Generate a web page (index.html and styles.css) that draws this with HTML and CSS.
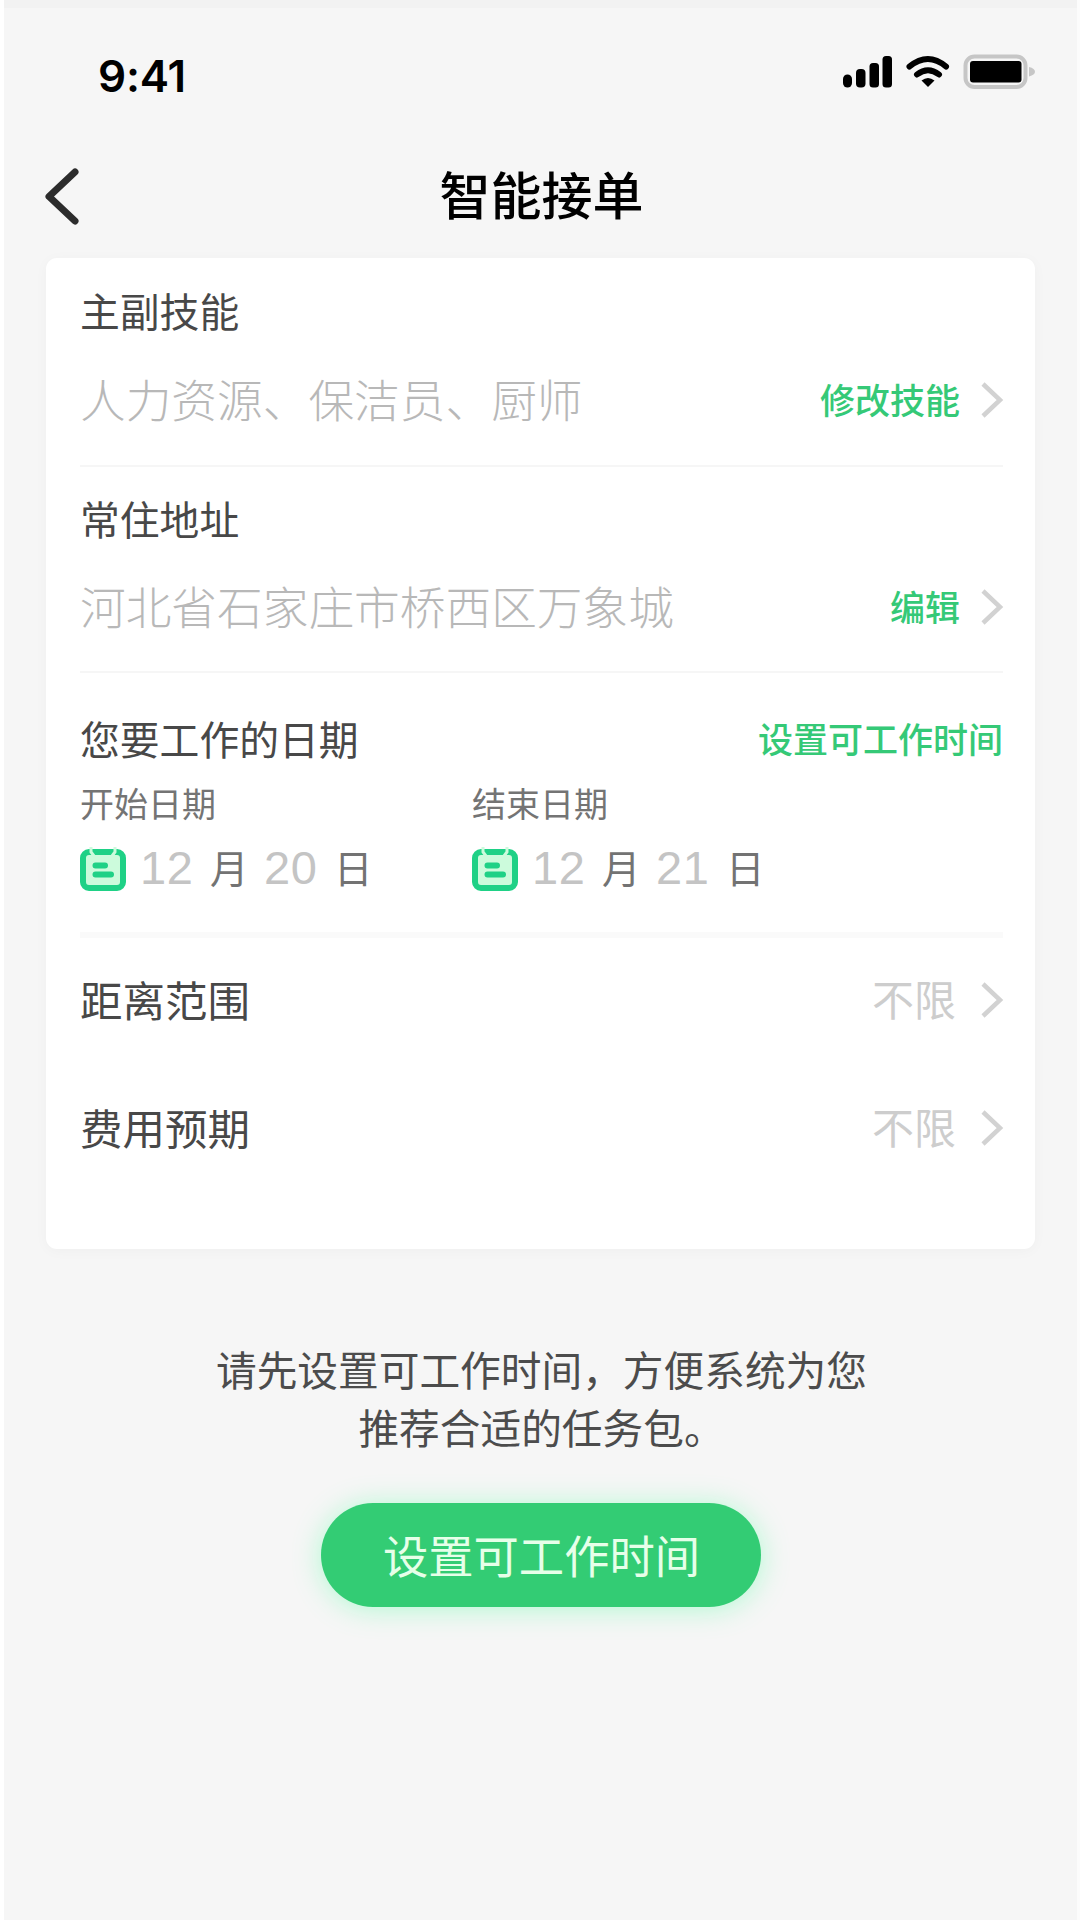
FILE: index.html
```html
<!DOCTYPE html>
<html lang="zh-CN">
<head>
    <meta charset="UTF-8">
    <meta name="viewport" content="width=device-width, initial-scale=1.0">
    <title>智能接单</title>
    <link rel="stylesheet" href="styles.css">
</head>
<body>

    <!-- Status Bar -->
    <div class="status-bar">
        <span class="time">9:41</span>
        <svg class="status-icons" width="194" height="36" viewBox="0 0 194 36">
            <rect x="1" y="20.500" width="9" height="13" rx="4.500"/>
            <rect x="14" y="15" width="9.500" height="18.500" rx="4"/>
            <rect x="27.500" y="9" width="9.500" height="24.500" rx="3.500"/>
            <rect x="40.500" y="2" width="9.500" height="31.500" rx="3.500"/>
            <g fill="none" stroke="#000" stroke-width="6">
                <path d="M67.500 12.500Q86 -2.500 104 12.500" stroke-linecap="round"/>
                <path d="M75 20.500Q86 12 97 20.500" stroke-linecap="round"/>
            </g>
            <path d="M79.500 26.500Q86 21.500 92.500 26.500L86 33Z"/>
            <rect x="123.500" y="2.500" width="60" height="30.500" rx="9" fill="none" stroke="#c6c6c6" stroke-width="4"/>
            <path d="M187 13Q193 14.500 193 17.800Q193 21 187 22.500Z" fill="#c6c6c6"/>
            <rect x="128" y="7" width="51.500" height="21.500" rx="3"/>
        </svg>
    </div>

    <!-- Header -->
    <div class="header">
        <svg class="back" width="36" height="60" viewBox="0 0 36 60">
            <path d="M30 5L4 29.500L30 54"/>
        </svg>
        <h1>智能接单</h1>
    </div>

    <!-- Settings Card -->
    <div class="card">
        <div class="section skills">
            <h2>主副技能</h2>
            <div class="row">
                <span class="value">人力资源、保洁员、厨师</span>
                <a class="link" href="#">修改技能</a>
                <svg class="arrow" width="24" height="38" viewBox="0 0 24 38"><path d="M3 3L20 19L3 35"/></svg>
            </div>
        </div>

        <div class="section address">
            <h2>常住地址</h2>
            <div class="row">
                <span class="value">河北省石家庄市桥西区万象城</span>
                <a class="link" href="#">编辑</a>
                <svg class="arrow" width="24" height="38" viewBox="0 0 24 38"><path d="M3 3L20 19L3 35"/></svg>
            </div>
        </div>

        <div class="section dates">
            <div class="row">
                <h2>您要工作的日期</h2>
                <a class="link set-time" href="#">设置可工作时间</a>
            </div>
            <div class="date-list">
                <div class="date">
                    <h3>开始日期</h3>
                    <div class="date-value">
                        <svg class="calendar" width="46" height="44" viewBox="0 0 46 44">
                            <rect x="3" y="5" width="40" height="36" rx="6" fill="#ccfbdc" stroke="#1fd186" stroke-width="6"/>
                            <path d="M13 2.500H33V8H13Z" fill="#1fd186"/>
                            <path d="M11 0V5L14 9M35 0V5L32 9" fill="none" stroke="#ccfbdc" stroke-width="3"/>
                            <path d="M15.500 18.500H25M15.500 27.500H31" stroke="#1fd186" stroke-width="6" stroke-linecap="round"/>
                        </svg>
                        <span class="num">12</span><span class="unit">月</span><span class="num day">20</span><span class="unit">日</span>
                    </div>
                </div>
                <div class="date">
                    <h3>结束日期</h3>
                    <div class="date-value">
                        <svg class="calendar" width="46" height="44" viewBox="0 0 46 44">
                            <rect x="3" y="5" width="40" height="36" rx="6" fill="#ccfbdc" stroke="#1fd186" stroke-width="6"/>
                            <path d="M13 2.500H33V8H13Z" fill="#1fd186"/>
                            <path d="M11 0V5L14 9M35 0V5L32 9" fill="none" stroke="#ccfbdc" stroke-width="3"/>
                            <path d="M15.500 18.500H25M15.500 27.500H31" stroke="#1fd186" stroke-width="6" stroke-linecap="round"/>
                        </svg>
                        <span class="num">12</span><span class="unit">月</span><span class="num day">21</span><span class="unit">日</span>
                    </div>
                </div>
            </div>
        </div>

        <div class="section limits">
            <div class="row">
                <h2>距离范围</h2>
                <span class="limit">不限</span>
                <svg class="arrow" width="24" height="38" viewBox="0 0 24 38"><path d="M3 3L20 19L3 35"/></svg>
            </div>
            <div class="row">
                <h2>费用预期</h2>
                <span class="limit">不限</span>
                <svg class="arrow" width="24" height="38" viewBox="0 0 24 38"><path d="M3 3L20 19L3 35"/></svg>
            </div>
        </div>
    </div>

    <p class="tip">请先设置可工作时间，方便系统为您<br>推荐合适的任务包。</p>
    <button class="submit" type="button">设置可工作时间</button>

</body>
</html>
```
FILE: styles.css
```css
/* Reset default margin/padding */
* {
    margin: 0;
    padding: 0;
    box-sizing: border-box;
}

body {
    font-family: "Noto Sans CJK SC", sans-serif;
    background-color: #f6f6f6;
    height: 1920px;
    border-left: 4px solid #fff;
    border-right: 3px solid #fcfcfc;
    overflow: hidden;
}

/* Status bar */
.status-bar {
    height: 136px;
    border-top: 8px solid #f2f2f2;
    padding: 0 41px 0 94px;
    display: flex;
    justify-content: space-between;
    align-items: flex-start;
}

.time {
    font-family: Inter, sans-serif;
    font-size: 44px;
    font-weight: 600;
    line-height: 60px;
    margin-top: 38px;
    letter-spacing: -0.2px;
    color: #000;
}

.status-icons {
    margin-top: 46px;
}

/* Header */
.header {
    height: 122px;
    display: flex;
    align-items: center;
    padding: 0 41px;
}

.back {
    fill: none;
    stroke: #2c2c2c;
    stroke-width: 7;
    stroke-linecap: round;
    stroke-linejoin: round;
}

.header h1 {
    flex: 1;
    margin-right: 34px;
    text-align: center;
    font-size: 51px;
    font-weight: 500;
    line-height: 70px;
    padding-bottom: 8px;
    color: #000;
}

/* Settings card */
.card {
    margin: 0 42px;
    height: 991px;
    padding: 0 32px 0 34px;
    background: #fff;
    border-radius: 11px;
    box-shadow: 0 2px 14px rgba(0, 0, 0, 0.03);
}

.section {
    border-bottom: 2px solid #f6f6f6;
}

.section h2 {
    font-size: 39.8px;
    font-weight: 400;
    line-height: 60px;
    color: #484848;
}

.row {
    height: 60px;
    display: flex;
    align-items: center;
}

.value {
    font-size: 45.7px;
    font-weight: 300;
    line-height: 58px;
    padding-bottom: 2px;
    color: #b8b8b8;
}

.link {
    margin-left: auto;
    font-size: 35px;
    font-weight: 500;
    line-height: 58px;
    padding-bottom: 1px;
    color: #35c977;
    text-decoration: none;
}

.arrow {
    margin: 2px -1px 0 20px;
    fill: none;
    stroke: #d2d2d2;
    stroke-width: 4.5;
}

.skills {
    padding: 22px 0 36px;
}

.skills .row {
    margin-top: 29px;
}

.address {
    padding: 21px 0 35px;
}

.address .row {
    margin-top: 28px;
}

/* Work dates */
.dates {
    padding: 35px 0 39px;
    border-bottom: 6px solid #fafafa;
}

.date-list {
    display: flex;
    margin-top: 15px;
}

.date {
    width: 392px;
}

.date h3 {
    font-size: 34px;
    font-weight: 400;
    line-height: 40px;
    color: #747474;
}

.date-value {
    display: flex;
    align-items: center;
    height: 50px;
    margin-top: 20px;
}

.calendar {
    margin-top: 1px;
}

.num {
    width: 70px;
    margin-left: 14px;
    font-family: "Liberation Sans", Arial, sans-serif;
    font-size: 47px;
    line-height: 50px;
    letter-spacing: 0.6px;
    color: #c4c4c4;
}

.num.day {
    margin-left: 14px;
}

.unit {
    width: 40px;
    font-size: 38.5px;
    font-weight: 400;
    line-height: 46px;
    padding-bottom: 4px;
    color: #737373;
}

/* Distance and price */
.limits {
    padding-top: 31px;
    border-bottom: none;
}

.limits .row + .row {
    margin-top: 68px;
}

.limits h2 {
    font-size: 42.5px;
}

.limit {
    margin-left: auto;
    margin-right: 4px;
    font-size: 42px;
    font-weight: 400;
    line-height: 56px;
    padding-bottom: 3px;
    color: #cdcdcd;
}

/* Bottom tip and button */
.tip {
    margin: 91px 0 0 2px;
    text-align: center;
    font-size: 40.7px;
    font-weight: 400;
    line-height: 58px;
    color: #4c4c4c;
}

.submit {
    display: block;
    width: 440px;
    height: 104px;
    margin: 47px auto 0;
    padding: 0 0 2px 2px;
    border: none;
    border-radius: 52px;
    background: #33cc74;
    box-shadow: 0 2px 28px rgba(80, 255, 160, 0.42);
    font-family: inherit;
    font-size: 45.3px;
    font-weight: 400;
    color: #e6ffe9;
}
```
